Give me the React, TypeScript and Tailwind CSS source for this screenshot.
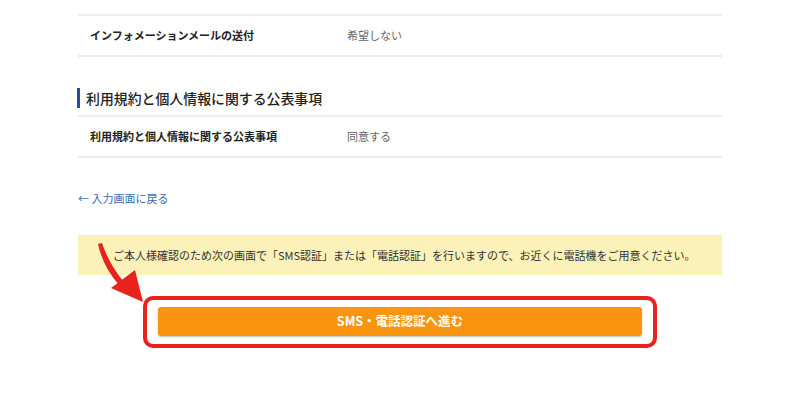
import React from "react";

const font = { fontFamily: '"Noto Sans CJK JP", "Noto Sans", sans-serif' };

function Row({ label, value }: { label: string; value: string }) {
  return (
    <div className="grid grid-cols-[269px_1fr] items-center h-[41px] border-b-2 border-[#ececec]">
      <div className="pl-3 text-[11px] font-bold text-[#222]">{label}</div>
      <div className="text-[11px] text-[#666]">{value}</div>
    </div>
  );
}

export default function App() {
  return (
    <div className="w-[800px] h-[396px] bg-white overflow-hidden" style={font}>
      <div className="relative mx-auto w-[644px] pt-[14px]">
        <div className="border-t-2 border-[#ececec]">
          <Row label="インフォメーションメールの送付" value="希望しない" />
        </div>

        <div className="mt-[31px] flex items-center h-[20px] -ml-px">
          <div className="w-[3px] h-[20px] bg-[#1f4f9e]" />
          <div className="ml-[6px] text-[13.9px] font-medium text-[#222]">
            利用規約と個人情報に関する公表事項
          </div>
        </div>

        <div className="mt-[7px] border-t-2 border-[#ececec]">
          <Row label="利用規約と個人情報に関する公表事項" value="同意する" />
        </div>

        <div className="mt-[32px] text-[11px] text-[#3a6cb0] leading-[16px]">
          ← 入力画面に戻る
        </div>

        <div className="mt-[29px] h-[40px] bg-[#fcf1b9] flex items-center pl-[35px] text-[11px] text-[#333]">
          ご本人様確認のため次の画面で「SMS認証」または「電話認証」を行いますので、お近くに電話機をご用意ください。
        </div>

        <div className="mt-[21px] ml-[65px] w-[514px] h-[52px] border-4 border-[#e8221c] rounded-[10px] pt-[7px] px-[11px]">
          <div className="h-[29px] rounded-[3px] bg-[#f8940e] shadow-[0_1px_2px_rgba(0,0,0,0.25)] flex items-center justify-center text-white font-bold text-[12.5px]">
            SMS・電話認証へ進む
          </div>
        </div>

        <svg
          className="absolute left-[-78px] top-0 pointer-events-none"
          width="800"
          height="396"
          viewBox="0 0 800 396"
        >
          <path
            d="M98 244 Q103 267 119 285 L123.5 281.5 Q109 264 102 243 Z"
            fill="#e8221c"
          />
          <path d="M111 288 L135 270 L143 302 Z" fill="#e8221c" />
        </svg>
      </div>
    </div>
  );
}
